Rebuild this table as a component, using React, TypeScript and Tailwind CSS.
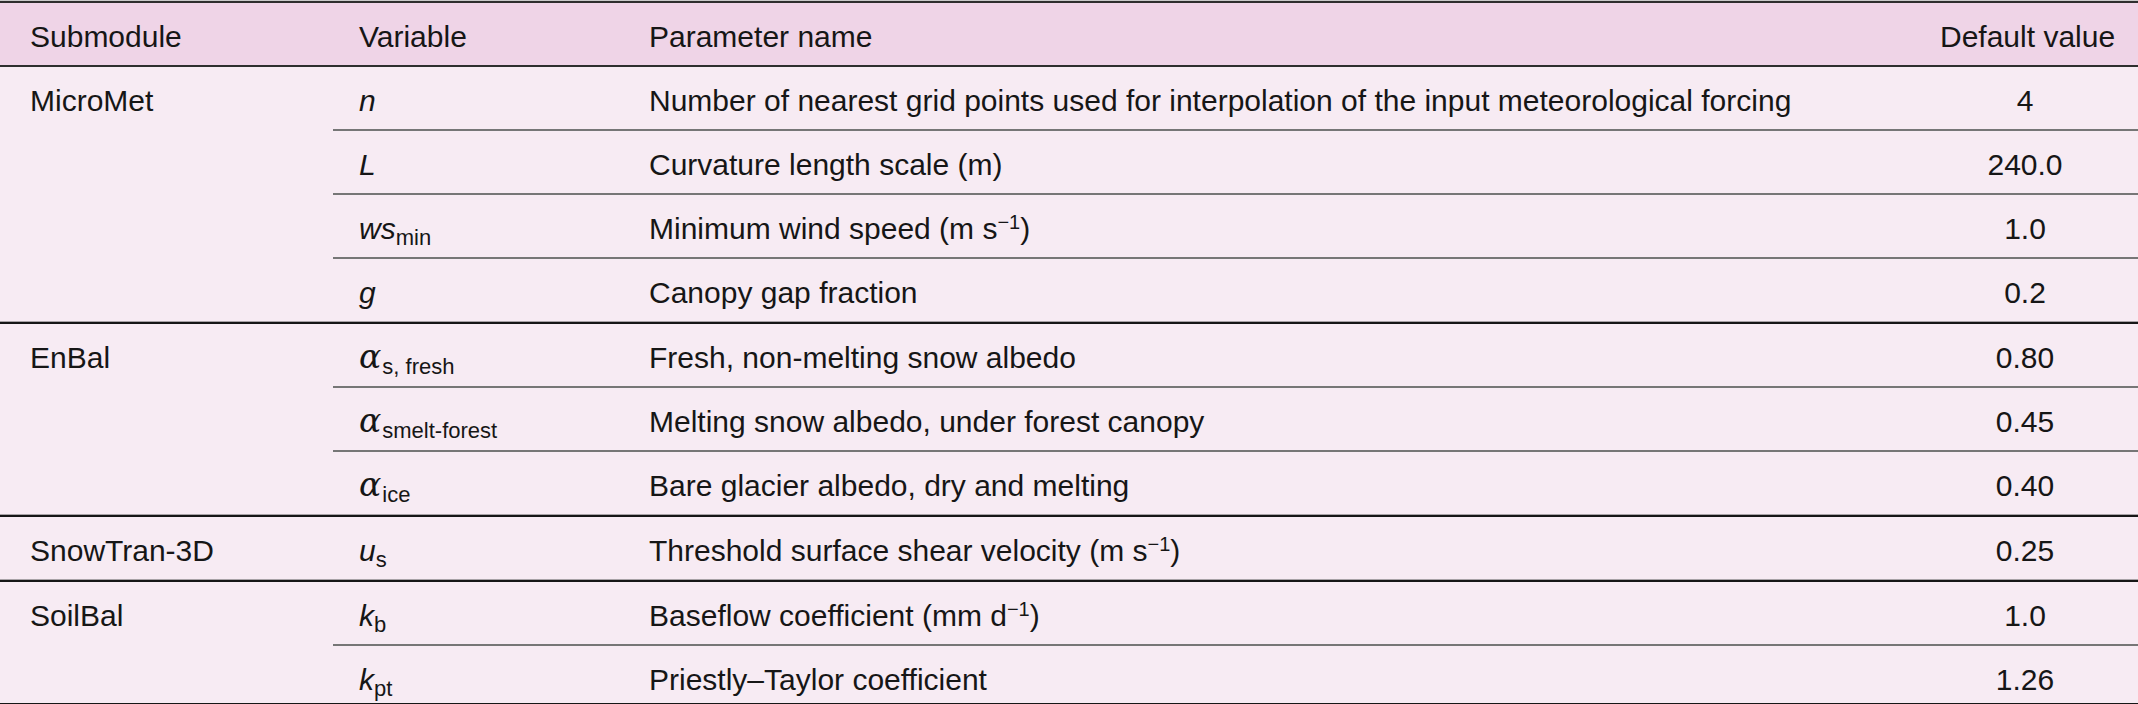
import React from "react";

type Row = { v: React.ReactNode; name: React.ReactNode; value: string };
type Group = { module: string; rows: Row[] };

const Alpha = () => (
  <span className="font-['DejaVu_Serif',serif] italic text-[33px] leading-none mr-[1px]">α</span>
);
const Sub = ({ children }: { children: React.ReactNode }) => (
  <sub className="not-italic text-[22px]">{children}</sub>
);
const Sup = ({ children }: { children: React.ReactNode }) => <sup className="text-[20px]">{children}</sup>;
const I = ({ children }: { children: React.ReactNode }) => <span className="italic">{children}</span>;

const groups: Group[] = [
  {
    module: "MicroMet",
    rows: [
      { v: <I>n</I>, name: "Number of nearest grid points used for interpolation of the input meteorological forcing", value: "4" },
      { v: <I>L</I>, name: "Curvature length scale (m)", value: "240.0" },
      { v: <><I>ws</I><Sub>min</Sub></>, name: <>Minimum wind speed (m s<Sup>−1</Sup>)</>, value: "1.0" },
      { v: <I>g</I>, name: "Canopy gap fraction", value: "0.2" },
    ],
  },
  {
    module: "EnBal",
    rows: [
      { v: <><Alpha /><Sub>s, fresh</Sub></>, name: "Fresh, non-melting snow albedo", value: "0.80" },
      { v: <><Alpha /><Sub>smelt-forest</Sub></>, name: "Melting snow albedo, under forest canopy", value: "0.45" },
      { v: <><Alpha /><Sub>ice</Sub></>, name: "Bare glacier albedo, dry and melting", value: "0.40" },
    ],
  },
  {
    module: "SnowTran-3D",
    rows: [{ v: <><I>u</I><Sub>s</Sub></>, name: <>Threshold surface shear velocity (m s<Sup>−1</Sup>)</>, value: "0.25" }],
  },
  {
    module: "SoilBal",
    rows: [
      { v: <><I>k</I><Sub>b</Sub></>, name: <>Baseflow coefficient (mm d<Sup>−1</Sup>)</>, value: "1.0" },
      { v: <><I>k</I><Sub>pt</Sub></>, name: "Priestly–Taylor coefficient", value: "1.26" },
    ],
  },
];

export default function App() {
  return (
    <div className="w-[2138px] h-[704px] overflow-hidden bg-[#f7ebf3] text-[#161616] font-['Liberation_Sans',Arial,sans-serif] text-[30px] leading-[36px] border-t border-[#c9c9c9]">
      {/* header */}
      <div className="flex h-[66px] bg-[#efd4e7] border-t-2 border-b-2 border-[#2e2e2e] pt-[16px]">
        <div className="w-[333px] shrink-0 pl-[30px]">Submodule</div>
        <div className="w-[290px] shrink-0 pl-[26px]">Variable</div>
        <div className="flex-1 pl-[26px]">Parameter name</div>
        <div className="w-[226px] shrink-0 pl-[28px] pr-[24px] text-center whitespace-nowrap">Default value</div>
      </div>

      {groups.map((g, gi) => {
        const lastGroup = gi === groups.length - 1;
        return (
          <div key={g.module} className="border-b-2 border-[#161616]">
            <div className={lastGroup ? "flex" : "flex border-b border-[#a8a2a6]"}>
              <div className="w-[333px] shrink-0 pl-[30px] pt-[16px]">{g.module}</div>
              <div className="flex-1 flex flex-col">
                {g.rows.map((r, ri) => {
                  const last = ri === g.rows.length - 1;
                  const cls = !last
                    ? "h-[64px] border-b-2 border-[#767676]"
                    : lastGroup
                      ? "h-[57px]"
                      : "h-[62px]";
                  return (
                    <div key={ri} className={`flex pt-[16px] ${cls}`}>
                      <div className="w-[290px] shrink-0 pl-[26px] whitespace-nowrap">{r.v}</div>
                      <div className="flex-1 pl-[26px] whitespace-nowrap">{r.name}</div>
                      <div className="w-[226px] shrink-0 px-[26px] text-center">{r.value}</div>
                    </div>
                  );
                })}
              </div>
            </div>
          </div>
        );
      })}
    </div>
  );
}
